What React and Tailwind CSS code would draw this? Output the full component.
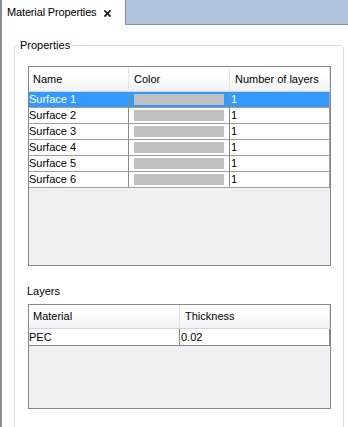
import React from "react";

const surfaces = [
  "Surface 1",
  "Surface 2",
  "Surface 3",
  "Surface 4",
  "Surface 5",
  "Surface 6",
];

const layers = [{ material: "PEC", thickness: "0.02" }];

function CloseIcon() {
  return (
    <svg width="7" height="7" viewBox="0 0 7 7" className="block">
      <path d="M1 1 L6 6 M6 1 L1 6" stroke="#111" strokeWidth="1.7" strokeLinecap="square" />
    </svg>
  );
}

function HeaderCell({ children, className = "" }) {
  return (
    <div
      className={`h-full flex items-center pl-[4px] border-r border-[#e2e4e7] ${className}`}
    >
      {children}
    </div>
  );
}

export default function App() {
  return (
    <div
      className="w-[348px] h-[427px] overflow-hidden bg-white border-l-2 border-[#8b8e95] flex flex-col text-[11px] text-black"
      style={{ fontFamily: '"Liberation Sans", Arial, sans-serif' }}
    >
      {/* tab strip */}
      <div className="flex h-[25px] shrink-0">
        <div className="w-[123px] bg-white flex items-center pl-[5px]">
          <span className="leading-[13px] tracking-[-0.15px]">Material Properties</span>
          <span className="ml-[8px] mt-[1px]">
            <CloseIcon />
          </span>
        </div>
        <div className="flex-1 bg-[#b0c4de] border-l border-b border-[#8b8f98]" />
      </div>

      {/* content */}
      <div className="pl-[12px] pt-[14px]">
        <fieldset className="w-[330px] h-[420px] border border-[#d5dfe5] rounded-[3px] pl-[13px] pr-[12px]">
          <legend className="-ml-[9px] px-[1px] leading-[13px]">Properties</legend>

          {/* properties table */}
          <div className="mt-[14px] w-[303px] h-[200px] border border-[#828790] bg-[#f0f0f0] flex flex-col">
            <div className="h-[25px] flex bg-linear-to-b from-white from-40% to-[#f0f1f3] border-b border-[#d5d6d8]">
              <HeaderCell className="w-[100px]">Name</HeaderCell>
              <HeaderCell className="w-[101px] pl-[5px]">Color</HeaderCell>
              <HeaderCell className="flex-1 pl-[5px]">Number of layers</HeaderCell>
            </div>
            {surfaces.map((name, i) => {
              const selected = i === 0;
              return (
                <div
                  key={name}
                  className={`h-[16px] flex border-b border-r border-[#a0a0a0] ${
                    selected ? "bg-[#3399ff] text-white" : "bg-white"
                  }`}
                >
                  <div className="w-[100px] border-r border-[#8a8a8a] flex items-center leading-[13px]">
                    {name}
                  </div>
                  <div className="w-[101px] border-r border-[#8a8a8a] flex items-center">
                    <div className="ml-[5px] w-[90px] h-[11px] bg-[#c0c0c0]" />
                  </div>
                  <div className="flex-1 flex items-center pl-[1px] leading-[13px]">1</div>
                </div>
              );
            })}
          </div>

          <div className="mt-[19px] leading-[13px] -ml-[1px]">Layers</div>

          {/* layers table */}
          <div className="mt-[6px] w-[303px] h-[105px] border border-[#828790] bg-[#f0f0f0] flex flex-col">
            <div className="h-[24px] flex bg-linear-to-b from-white from-40% to-[#f0f1f3] border-b border-[#d5d6d8]">
              <HeaderCell className="w-[151px]">Material</HeaderCell>
              <HeaderCell className="flex-1 pl-[5px]">Thickness</HeaderCell>
            </div>
            {layers.map((l) => (
              <div
                key={l.material}
                className="h-[17px] flex bg-white border-b border-r border-[#8a8a8a]"
              >
                <div className="w-[151px] border-r border-[#8a8a8a] flex items-center leading-[13px]">
                  {l.material}
                </div>
                <div className="flex-1 flex items-center pl-[1px] leading-[13px]">
                  {l.thickness}
                </div>
              </div>
            ))}
          </div>
        </fieldset>
      </div>
    </div>
  );
}
